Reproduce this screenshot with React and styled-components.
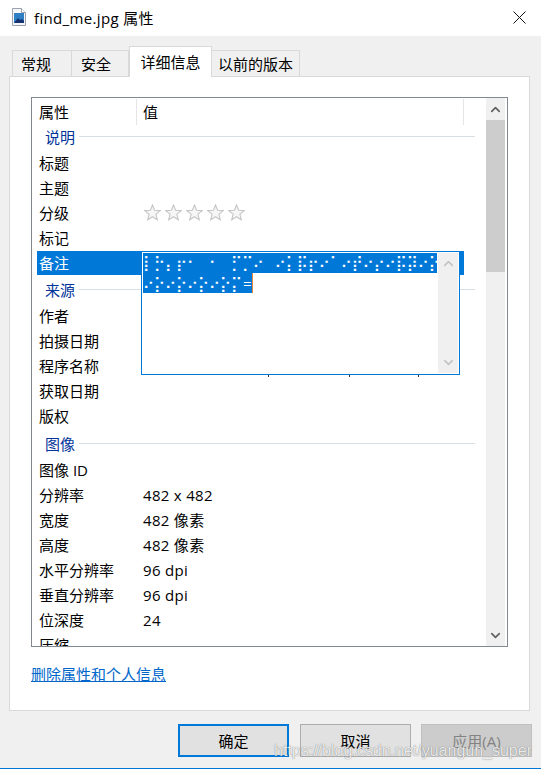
import React from "react";
import styled, { createGlobalStyle } from "styled-components";
import { ChevronUp, ChevronDown } from "lucide-react";

const GlobalStyle = createGlobalStyle`
  html, body {
    margin: 0;
    padding: 0;
    background: #f0f0f0;
  }
`;

const sections = [
  {
    title: "说明",
    rows: [["标题"], ["主题"], ["分级", "stars"], ["标记"], ["备注", "", true]],
  },
  {
    title: "来源",
    rows: [["作者"], ["拍摄日期"], ["程序名称"], ["获取日期"], ["版权"]],
  },
  {
    title: "图像",
    rows: [
      ["图像 ID"],
      ["分辨率", "482 x 482"],
      ["宽度", "482 像素"],
      ["高度", "482 像素"],
      ["水平分辨率", "96 dpi"],
      ["垂直分辨率", "96 dpi"],
      ["位深度", "24"],
      ["压缩"],
    ],
  },
];

const FileIcon = () => (
  <svg width="14" height="18" viewBox="0 0 14 18">
    <path d="M.5.5h9l4 4v13H.5z" fill="#f4f6f8" stroke="#9aa3ad" />
    <path d="M9.5.5v4h4" fill="#fff" stroke="#9aa3ad" />
    <rect x="2" y="5" width="10" height="10" fill="#2f7fc4" />
    <path d="M2 15l4-5 2 2 2-1 2 2v2z" fill="#14336e" />
  </svg>
);

const CloseIcon = () => (
  <svg width="13" height="13" viewBox="0 0 13 13">
    <path d="M.5.5l12 12M12.5.5l-12 12" stroke="#111" strokeWidth="1" fill="none" />
  </svg>
);

const Star = () => (
  <svg width="17" height="17" viewBox="0 0 17 17">
    <path
      d="M8.5 1l2.1 5.2 5.6.4-4.3 3.6 1.4 5.5-4.8-3-4.8 3 1.4-5.5L.8 6.6l5.6-.4z"
      fill="#f6f6f6"
      stroke="#c6c6c6"
      strokeWidth="1.1"
    />
  </svg>
);

const App = () => {
  return (
    <Window>
      <GlobalStyle />
      <TitleBar>
        <FileIcon />
        <TitleText>find_me.jpg 属性</TitleText>
        <CloseButton>
          <CloseIcon />
        </CloseButton>
      </TitleBar>

      <Body>
        <Tabs>
          <Tab $width={60} $shift={12}>
            常规
          </Tab>
          <Tab $width={57} $shift={8}>
            安全
          </Tab>
          <Tab $width={83} $active>
            详细信息
          </Tab>
          <Tab $width={88}>以前的版本</Tab>
        </Tabs>

        <Panel>
          <ListBox>
            <ListContent>
              <HeaderRow>
                <HeaderCell $width={97}>属性</HeaderCell>
                <HeaderCell $width={320}>值</HeaderCell>
              </HeaderRow>
              {sections.map((section) => (
                <Section key={section.title}>
                  <GroupRow>
                    <GroupTitle>{section.title}</GroupTitle>
                    <GroupLine />
                  </GroupRow>
                  {section.rows.map(([name, value, selected]) => (
                    <Row key={name} $selected={selected}>
                      <RowName>{name}</RowName>
                      {value === "stars" ? (
                        <Stars>
                          <Star />
                          <Star />
                          <Star />
                          <Star />
                          <Star />
                        </Stars>
                      ) : (
                        <RowValue>{value}</RowValue>
                      )}
                    </Row>
                  ))}
                </Section>
              ))}
            </ListContent>

            <ScrollBar>
              <ScrollButton>
                <ChevronUp size={15} strokeWidth={2.6} color="#606060" />
              </ScrollButton>
              <ScrollThumb />
              <ScrollTrack />
              <ScrollButton>
                <ChevronDown size={15} strokeWidth={2.6} color="#606060" />
              </ScrollButton>
            </ScrollBar>

            <Descender $left={236} />
            <Descender $left={317} />
            <Descender $left={386} />

            <EditPopup>
              <EditText>
                <SelectedLine $full>⡇⡓⡄⡖⠂⠀⠂⠀⡋⡉⠔⠀⠔⡅⡯⡖⠔⠁⠔⡞⠔⡔⠔⡯⡽⠔⡕</SelectedLine>
                <SelectedLine>
                  ⠔⡕⠔⡕⠔⡕⠔⡕⡍<Equals>=</Equals>
                </SelectedLine>
              </EditText>
              <PopupScroll>
                <ChevronUp size={15} strokeWidth={2.6} color="#c4c4c4" />
                <ChevronDown size={15} strokeWidth={2.6} color="#c4c4c4" />
              </PopupScroll>
            </EditPopup>
          </ListBox>

          <RemoveLink>删除属性和个人信息</RemoveLink>
        </Panel>

        <Footer>
          <Button $primary>确定</Button>
          <Button>取消</Button>
          <Button $disabled>应用(A)</Button>
        </Footer>
      </Body>

      <Watermark>https://blog.csdn.net/yuangun_super</Watermark>
    </Window>
  );
};

const Window = styled.div`
  position: relative;
  width: 541px;
  height: 769px;
  overflow: hidden;
  display: flex;
  flex-direction: column;
  box-sizing: border-box;
  border-bottom: 1px solid #0078d7;
  background: #f0f0f0;
  color: #000;
  font-family: "Open Sans", "Noto Sans CJK SC", sans-serif;
  font-size: 15px;
`;

const TitleBar = styled.div`
  box-sizing: border-box;
  height: 36px;
  flex: none;
  display: flex;
  align-items: center;
  padding: 0 15px 2px 12px;
  background: #fff;
`;

const TitleText = styled.div`
  margin-left: 8px;
  font-size: 15px;
  letter-spacing: 0.35px;
  flex: 1;
`;

const CloseButton = styled.div`
  display: flex;
`;

const Body = styled.div`
  flex: 1;
  display: flex;
  flex-direction: column;
  padding: 10px 9px 0;
`;

const Tabs = styled.div`
  height: 31px;
  flex: none;
  display: flex;
  align-items: flex-end;
  padding-left: 3px;
  margin-bottom: -1px;
  position: relative;
  z-index: 1;
`;

const Tab = styled.div`
  box-sizing: border-box;
  width: ${(p) => p.$width}px;
  height: ${(p) => (p.$active ? 31 : 27)}px;
  display: flex;
  align-items: center;
  justify-content: center;
  padding-right: ${(p) => p.$shift || 0}px;
  padding-bottom: ${(p) => (p.$active ? 1 : 0)}px;
  border: 1px solid #d9d9d9;
  border-left-width: ${(p) => (p.$active ? 1 : 0)}px;
  border-bottom-width: ${(p) => (p.$active ? 0 : 1)}px;
  background: ${(p) => (p.$active ? "#fff" : "#f0f0f0")};
  white-space: nowrap;
  &:first-child {
    border-left-width: 1px;
  }
`;

const Panel = styled.div`
  box-sizing: border-box;
  width: 521px;
  height: 635px;
  flex: none;
  border: 1px solid #d9d9d9;
  background: #fff;
  padding: 20px 21px 0;
`;

const ListBox = styled.div`
  position: relative;
  box-sizing: border-box;
  width: 477px;
  height: 550px;
  display: flex;
  overflow: hidden;
  border: 1px solid #828790;
`;

const ListContent = styled.div`
  flex: none;
  width: 454px;
  overflow: hidden;
  padding-left: 5px;
  box-sizing: border-box;
`;

const HeaderRow = styled.div`
  display: flex;
  height: 27px;
  padding-top: 1px;
  box-sizing: border-box;
`;

const HeaderCell = styled.div`
  width: ${(p) => p.$width}px;
  margin-right: 6px;
  height: 26px;
  line-height: 26px;
  border-right: 1px solid #e5e5e5;
  &:first-child {
    padding-left: 2px;
  }
`;

const Section = styled.div`
  margin-top: 3px;
  ${HeaderRow} + & {
    margin-top: 0;
  }
`;

const GroupRow = styled.div`
  box-sizing: border-box;
  height: 26px;
  display: flex;
  align-items: center;
  padding: 0 11px 3px 8px;
`;

const GroupTitle = styled.div`
  color: #003399;
  font-size: 15px;
`;

const GroupLine = styled.div`
  flex: 1;
  height: 1px;
  margin-left: 4px;
  background: #d5dfe5;
`;

const Row = styled.div`
  box-sizing: border-box;
  display: flex;
  align-items: center;
  width: 427px;
  height: ${(p) => (p.$selected ? 24 : 25)}px;
  margin-bottom: ${(p) => (p.$selected ? 1 : 0)}px;
  padding-bottom: ${(p) => (p.$selected ? 1 : 2)}px;
  color: ${(p) => (p.$selected ? "#fff" : "#000")};
  background: ${(p) => (p.$selected ? "#0078d7" : "transparent")};
`;

const RowName = styled.div`
  width: 104px;
  padding-left: 2px;
  flex: none;
  white-space: nowrap;
`;

const RowValue = styled.div`
  white-space: nowrap;
  letter-spacing: 0.3px;
`;

const Stars = styled.div`
  display: flex;
  gap: 4px;
  margin-left: 1px;
`;

const ScrollBar = styled.div`
  flex: none;
  width: 19px;
  display: flex;
  flex-direction: column;
  background: #f0f0f0;
`;

const ScrollButton = styled.div`
  flex: none;
  height: 22px;
  display: flex;
  align-items: center;
  justify-content: center;
`;

const ScrollThumb = styled.div`
  flex: none;
  height: 152px;
  background: #cdcdcd;
`;

const ScrollTrack = styled.div`
  flex: 1;
`;

const Descender = styled.div`
  position: absolute;
  left: ${(p) => p.$left}px;
  top: 277px;
  width: 1px;
  height: 2px;
  background: #333;
`;

const EditPopup = styled.div`
  position: absolute;
  left: 109px;
  top: 153px;
  box-sizing: border-box;
  width: 319px;
  height: 124px;
  display: flex;
  background: #fff;
  border: 1px solid #0078d7;
  padding: 1px;
`;

const EditText = styled.div`
  width: 294px;
  flex: none;
  font-family: "DejaVu Sans", sans-serif;
  font-size: 15px;
  color: #fff;
`;

const SelectedLine = styled.div`
  height: 20px;
  line-height: 20px;
  width: ${(p) => (p.$full ? "100%" : "fit-content")};
  background: #0078d7;
  white-space: pre;
  overflow: hidden;
  ${(p) => !p.$full && "border-right: 1px solid #e8893a;"}
`;

const Equals = styled.span`
  font-family: "Open Sans", sans-serif;
  padding: 0 1px;
`;

const PopupScroll = styled.div`
  flex: 1;
  display: flex;
  flex-direction: column;
  justify-content: space-between;
  align-items: center;
  padding: 3px 0;
  background: #f0f0f0;
  margin-left: 1px;
`;

const RemoveLink = styled.a`
  display: block;
  margin-top: 16px;
  font-size: 15px;
  line-height: 22px;
  color: #0066cc;
  text-decoration: underline;
`;

const Footer = styled.div`
  display: flex;
  justify-content: flex-end;
  gap: 10px;
  margin-top: 13px;
  width: 523px;
`;

const Button = styled.div`
  box-sizing: border-box;
  width: 111px;
  height: 33px;
  margin-right: ${(p) => (p.$primary ? 1 : 0)}px;
  display: flex;
  align-items: center;
  justify-content: center;
  background: ${(p) => (p.$disabled ? "#cccccc" : "#e1e1e1")};
  color: ${(p) => (p.$disabled ? "#838383" : "#000")};
  border: ${(p) => (p.$primary ? "2px solid #0078d7" : p.$disabled ? "1px solid #bfbfbf" : "1px solid #adadad")};
`;

const Watermark = styled.div`
  position: absolute;
  right: 9px;
  bottom: 8px;
  font-family: "Liberation Sans", sans-serif;
  font-size: 16px;
  color: rgba(255, 255, 255, 0.85);
  text-shadow: 0 0 1px rgba(70, 70, 70, 0.8);
  white-space: nowrap;
`;

export default App;
